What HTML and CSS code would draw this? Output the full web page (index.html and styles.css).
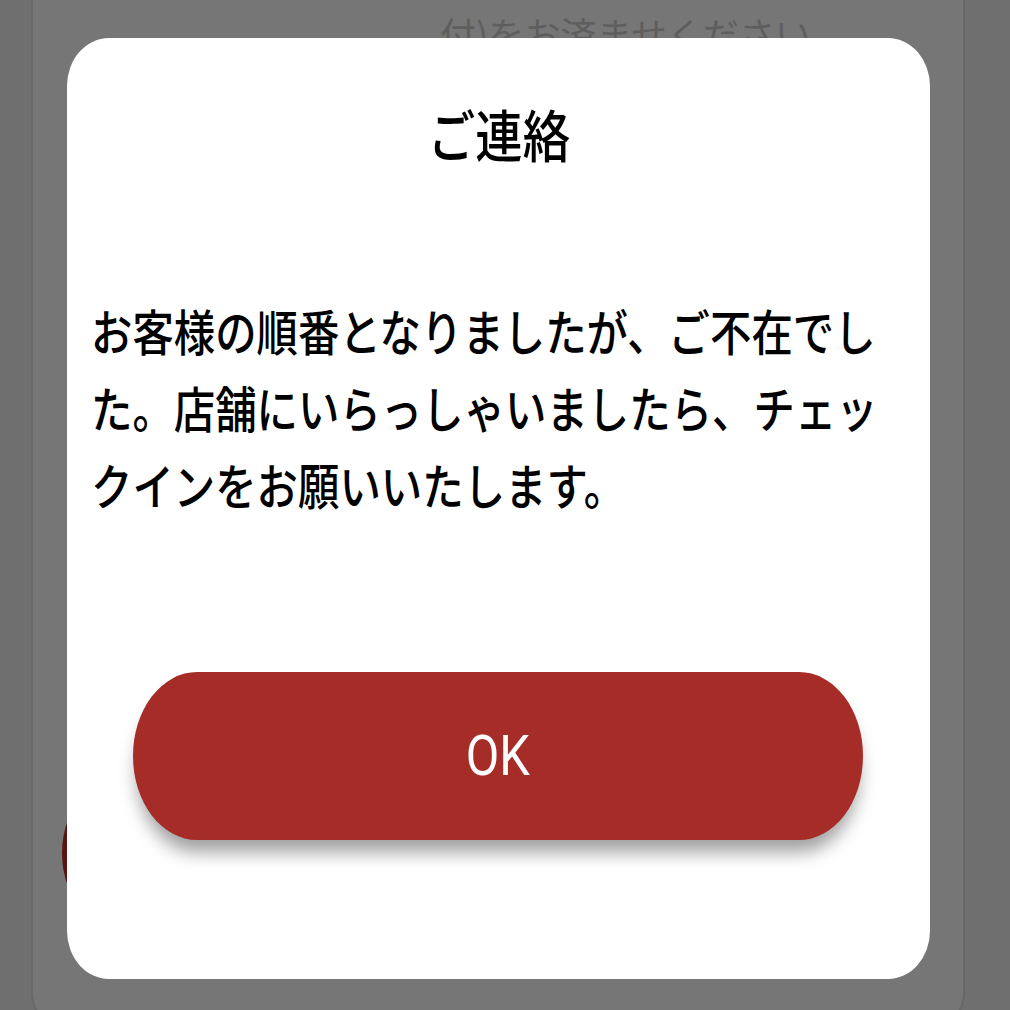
FILE: index.html
```html
<!DOCTYPE html>
<html lang="ja">
<head>
<meta charset="utf-8">
<title>ご連絡</title>
<link rel="stylesheet" href="styles.css">
</head>
<body>
<div class="page">
  <div class="card">
    <p class="bg-line">付)をお済ませください</p>
    <div class="bg-button"></div>
  </div>
</div>
<div class="modal" role="dialog" aria-labelledby="modal-title">
  <div class="modal-title-row">
    <h2 class="modal-title" id="modal-title">ご連絡</h2>
  </div>
  <p class="modal-body">お客様の順番となりましたが、ご不在でした。店舗にいらっしゃいましたら、チェックインをお願いいたします。</p>
  <button class="ok-button" type="button"><span class="ok-label">OK</span></button>
</div>
</body>
</html>
```

FILE: styles.css
```css
html, body {
  margin: 0;
  padding: 0;
  height: 100%;
  overflow: hidden;
}
body {
  background: #6f6f6f;
  font-family: "Noto Sans CJK JP", "Noto Sans", sans-serif;
}
.page {
  padding-left: 31px;
}
.card {
  width: 934px;
  height: 1048px;
  margin-top: -20px;
  background: #767676;
  border: 2px solid #686868;
  border-top: none;
  border-radius: 0 0 34px 34px;
  box-sizing: border-box;
  padding: 33px 0 0 407px;
}
.bg-line {
  margin: 0;
  font-size: 36px;
  line-height: 40px;
  color: #5e5e5e;
  white-space: nowrap;
}
.bg-button {
  width: 160px;
  height: 176px;
  border-radius: 50%;
  background: #581612;
  margin: 712px 0 0 -378px;
}
.modal {
  position: fixed;
  left: 67px;
  top: 38px;
  width: 863px;
  height: 941px;
  background: #ffffff;
  border-radius: 42px / 48px;
  box-sizing: border-box;
  padding-top: 67px;
  overflow: hidden;
}
.modal-title-row {
  text-align: center;
  height: 56px;
}
.modal-title {
  display: inline-block;
  margin: 0;
  font-size: 56px;
  line-height: 56px;
  font-weight: 500;
  color: #000000;
  transform: scaleX(0.845);
}
.modal-body {
  margin: 130px 0 0 24px;
  width: 19.2em;
  font-size: 49px;
  line-height: 77px;
  font-weight: 500;
  color: #000000;
  transform: scaleX(0.845);
  transform-origin: left top;
}
.ok-button {
  display: flex;
  align-items: center;
  justify-content: center;
  margin: 150px 0 0 66px;
  width: 730px;
  height: 168px;
  border: none;
  padding: 0;
  background: #a62c27;
  border-radius: 64px / 84px;
  box-shadow: 0 16px 18px -4px rgba(0, 0, 0, 0.38);
  cursor: pointer;
}
.ok-label {
  display: inline-block;
  font-family: Roboto, "Liberation Sans", sans-serif;
  font-size: 56px;
  line-height: 56px;
  color: #ffffff;
  transform: scaleX(0.87);
}
```
